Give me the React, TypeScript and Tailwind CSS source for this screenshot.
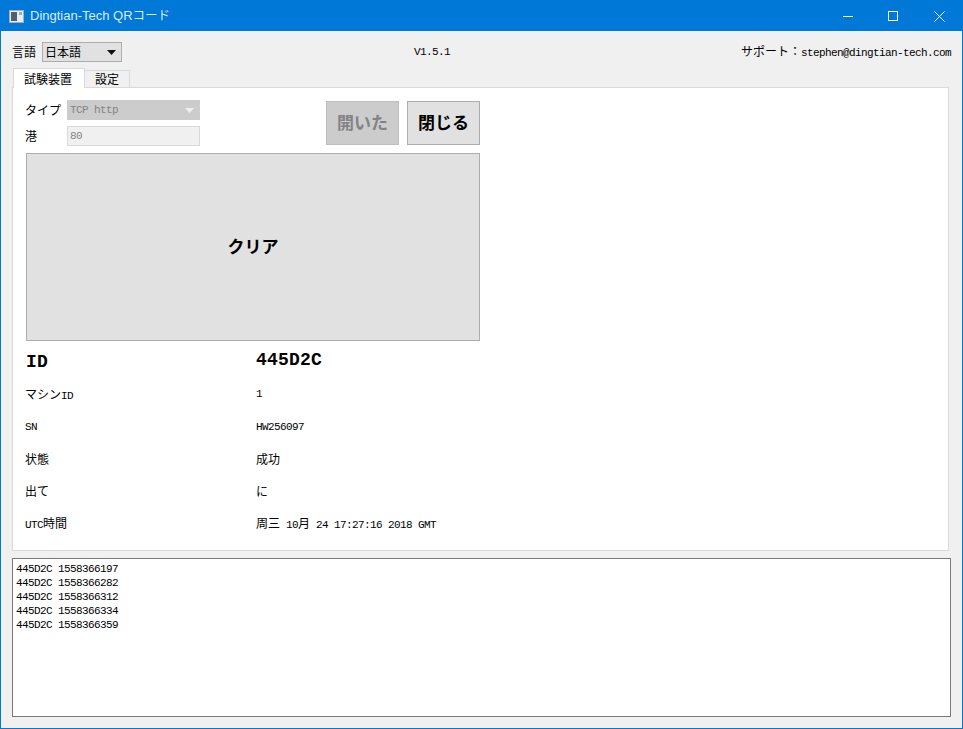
const mono = "font-['Liberation_Mono','Noto_Sans_CJK_JP',monospace]"
const cjk = "text-[12px] tracking-normal font-['Noto_Sans_CJK_JP',sans-serif]"
const heavy = "pb-[2px] text-[17px] tracking-normal font-bold font-['Noto_Sans_CJK_JP',sans-serif]"
const bigMono = "text-[18px] tracking-[0.2px] font-bold"

const logLines = ['1558366197', '1558366282', '1558366312', '1558366334', '1558366359']

function TitleBar() {
  return (
    <div className="flex h-[30px] shrink-0 items-center bg-[#0078d7] text-white">
      <svg className="ml-[8px] mr-[6px]" width="15" height="13" viewBox="0 0 15 13">
        <rect x="0.5" y="0.5" width="14" height="12" fill="#e8eef2" stroke="#9fb3bf" />
        <rect x="2" y="2" width="6" height="9" fill="#51606b" />
        <rect x="10" y="2" width="3" height="3" fill="#8fb1c8" />
      </svg>
      <span className="text-[12.5px] tracking-normal text-[#dcecf9] font-['Noto_Sans_CJK_JP',sans-serif]">
        <span className="font-['Liberation_Sans',sans-serif] text-[13px]">Dingtian-Tech QR</span>コード
      </span>
      <div className="ml-auto flex h-full">
        <button className="flex w-[46px] items-center justify-center pl-[2px]">
          <svg width="10" height="10" viewBox="0 0 10 10"><path d="M0 5.5h10" stroke="#fff" /></svg>
        </button>
        <button className="flex w-[46px] items-center justify-center">
          <svg width="10" height="10" viewBox="0 0 10 10"><rect x="0.5" y="0.5" width="9" height="9" fill="none" stroke="#fff" /></svg>
        </button>
        <button className="flex w-[46px] items-center justify-center">
          <svg width="11" height="11" viewBox="0 0 11 11"><path d="M0.5 0.5l10 10M10.5 0.5l-10 10" stroke="#fff" /></svg>
        </button>
      </div>
    </div>
  )
}

function InfoRow({ label, value }: { label: React.ReactNode; value: React.ReactNode }) {
  return (
    <div className="flex h-[32.4px] items-center">
      <div className="w-[231px]">{label}</div>
      <div>{value}</div>
    </div>
  )
}

export default function App() {
  return (
    <div className={`flex h-[729px] w-[963px] flex-col overflow-hidden border border-[#0078d7] bg-[#f0f0f0] text-[11px] tracking-[-0.6px] text-black ${mono}`}>
      <TitleBar />

      <div className="flex min-h-0 flex-1 flex-col px-[11px]">
        <div className="mt-[11px] flex h-[20px] items-center">
          <div className="flex w-[402px] items-center">
            <span className={cjk}>言語</span>
            <div className={`ml-[6px] flex h-[20px] w-[80px] items-center justify-between border border-[#adadad] bg-[#e1e1e1] pl-[2px] pr-[5px] ${cjk}`}>
              <span>日本語</span>
              <svg width="9" height="5" viewBox="0 0 9 5"><path d="M0 0h9L4.5 5z" fill="#111" /></svg>
            </div>
          </div>
          <span>V1.5.1</span>
          <span className="ml-auto"><span className={cjk}>サポート：</span>stephen@dingtian-tech.com</span>
        </div>

        <div className="mt-[6px] flex h-[20px] items-end pl-px">
          <div className={`z-10 flex h-[20px] w-[72px] items-center justify-center border border-b-0 border-[#d9d9d9] bg-white pr-[2px] ${cjk}`}>試験装置</div>
          <div className={`flex h-[18px] w-[45px] items-center justify-center border border-l-0 border-[#d9d9d9] bg-[#f0f0f0] ${cjk}`}>設定</div>
        </div>

        <div className="-mt-px h-[464px] w-[937px] border border-[#d9d9d9] bg-white pl-[13px] pt-[12px]">
          <div className="flex">
            <div className="w-[174px]">
              <div className="flex h-[20px] items-center">
                <span className={`-ml-px w-[42px] ${cjk}`}>タイプ</span>
                <div className="flex h-[20px] w-[133px] items-center justify-between bg-[#cccccc] px-[3px] text-[#838383]">
                  <span>TCP http</span>
                  <svg className="mr-[3px]" width="9" height="5" viewBox="0 0 9 5"><path d="M0 0h9L4.5 5z" fill="#f0f0f0" /></svg>
                </div>
              </div>
              <div className="mt-[6px] flex h-[20px] items-center">
                <span className={`-ml-px w-[42px] ${cjk}`}>港</span>
                <div className="flex h-[20px] w-[133px] items-center border border-[#d9d9d9] bg-[#f0f0f0] px-[2px] text-[#838383]">80</div>
              </div>
            </div>
            <div className="ml-[126px] mt-px flex gap-[8px]">
              <button className={`h-[44px] w-[73px] border border-[#bfbfbf] bg-[#cccccc] text-[#838383] ${heavy}`}>開いた</button>
              <button className={`h-[44px] w-[73px] border border-[#adadad] bg-[#e1e1e1] ${heavy}`}>閉じる</button>
            </div>
          </div>

          <button className={`mt-[7px] block h-[188px] w-[454px] border border-[#adadad] bg-[#e1e1e1] ${heavy}`}>クリア</button>

          <div className="-ml-px mt-[5px]">
            <InfoRow label={<span className={`ml-px ${bigMono}`}>ID</span>} value={<span className={`-mt-[4px] block ${bigMono}`}>445D2C</span>} />
            <InfoRow label={<><span className={cjk}>マシン</span>ID</>} value="1" />
            <InfoRow label="SN" value="HW256097" />
            <InfoRow label={<span className={cjk}>状態</span>} value={<span className={cjk}>成功</span>} />
            <InfoRow label={<span className={cjk}>出て</span>} value={<span className={cjk}>に</span>} />
            <InfoRow
              label={<>UTC<span className={cjk}>時間</span></>}
              value={<><span className={cjk}>周三</span> 10<span className={cjk}>月</span> 24 17:27:16 2018 GMT</>}
            />
          </div>
        </div>

        <div className="mt-[7px] h-[159px] w-[939px] border border-[#7a7a7a] bg-white pl-[3px] pt-[3px] leading-[14px]">
          {logLines.map((n) => (
            <div key={n}>445D2C {n}</div>
          ))}
        </div>
      </div>
    </div>
  )
}
